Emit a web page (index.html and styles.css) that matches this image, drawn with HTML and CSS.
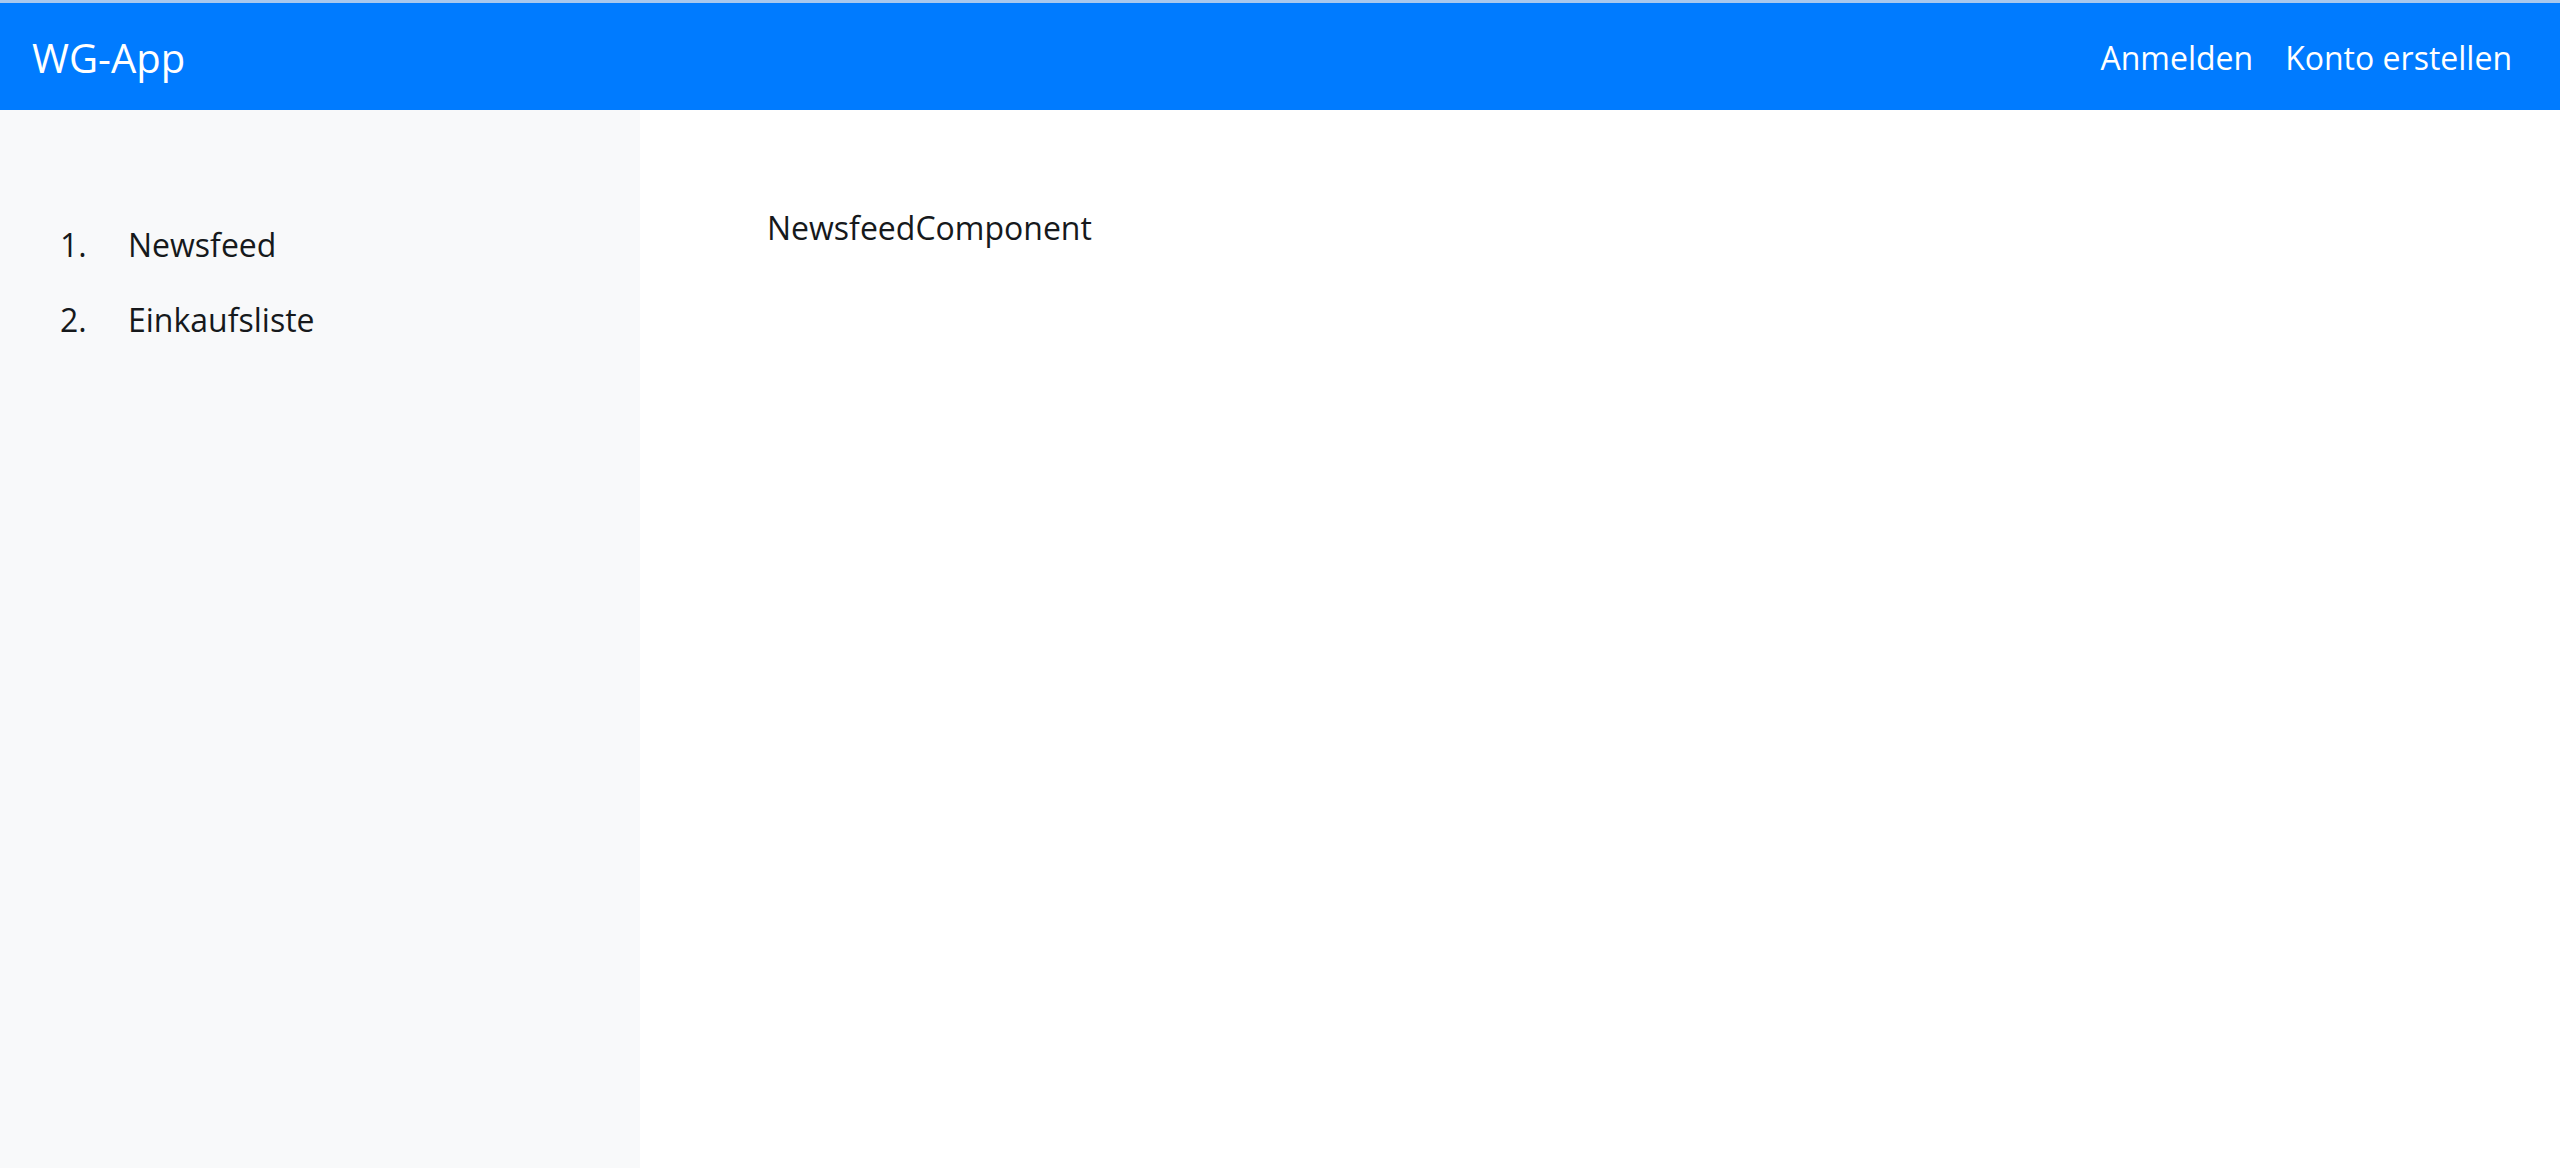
FILE: index.html
```html
<!DOCTYPE html>
<html lang="de">
<head>
<meta charset="utf-8">
<title>WG-App</title>
<link rel="stylesheet" href="styles.css">
</head>
<body>
<div class="page">
  <header class="navbar">
    <a class="brand" href="#">WG-App</a>
    <nav class="nav">
      <a class="nav-link" href="#">Anmelden</a>
      <a class="nav-link" href="#">Konto erstellen</a>
    </nav>
  </header>
  <div class="layout">
    <aside class="sidebar">
      <ol class="menu">
        <li class="menu-item"><span class="num">1.</span><span class="label">Newsfeed</span></li>
        <li class="menu-item"><span class="num">2.</span><span class="label">Einkaufsliste</span></li>
      </ol>
    </aside>
    <main class="content">
      <p class="component">NewsfeedComponent</p>
    </main>
  </div>
</div>
</body>
</html>
```

FILE: styles.css
```css
html, body {
  margin: 0;
  padding: 0;
  background: #ffffff;
}

body {
  font-family: "Open Sans", "Noto Sans", "DejaVu Sans", sans-serif;
  font-size: 32px;
  line-height: 1.5;
  color: #16191c;
}

.page {
  display: flex;
  flex-direction: column;
  height: 1168px;
}

.navbar {
  box-sizing: border-box;
  height: 110px;
  border-top: 3px solid #a8c8ee;
  background: #007bff;
  display: flex;
  align-items: center;
  justify-content: space-between;
  padding: 2px 32px 0 32px;
  flex: none;
}

.brand {
  color: #ffffff;
  text-decoration: none;
  font-size: 40px;
  line-height: 60px;
}

.nav {
  display: flex;
}

.nav-link {
  color: #ffffff;
  text-decoration: none;
  font-size: 32px;
  line-height: 48px;
  padding: 0 16px;
}

.layout {
  flex: 1;
  display: flex;
}

.sidebar {
  width: 640px;
  flex: none;
  background: #f8f9fa;
}

.menu {
  list-style: none;
  margin: 0;
  padding: 111px 0 0 60px;
  display: flex;
  flex-direction: column;
  gap: 27px;
}

.menu-item {
  display: flex;
  line-height: 48px;
}

.num {
  width: 68px;
  flex: none;
}

.content {
  flex: 1;
  padding: 94px 0 0 127px;
}

.component {
  margin: 0;
  line-height: 48px;
}
```
